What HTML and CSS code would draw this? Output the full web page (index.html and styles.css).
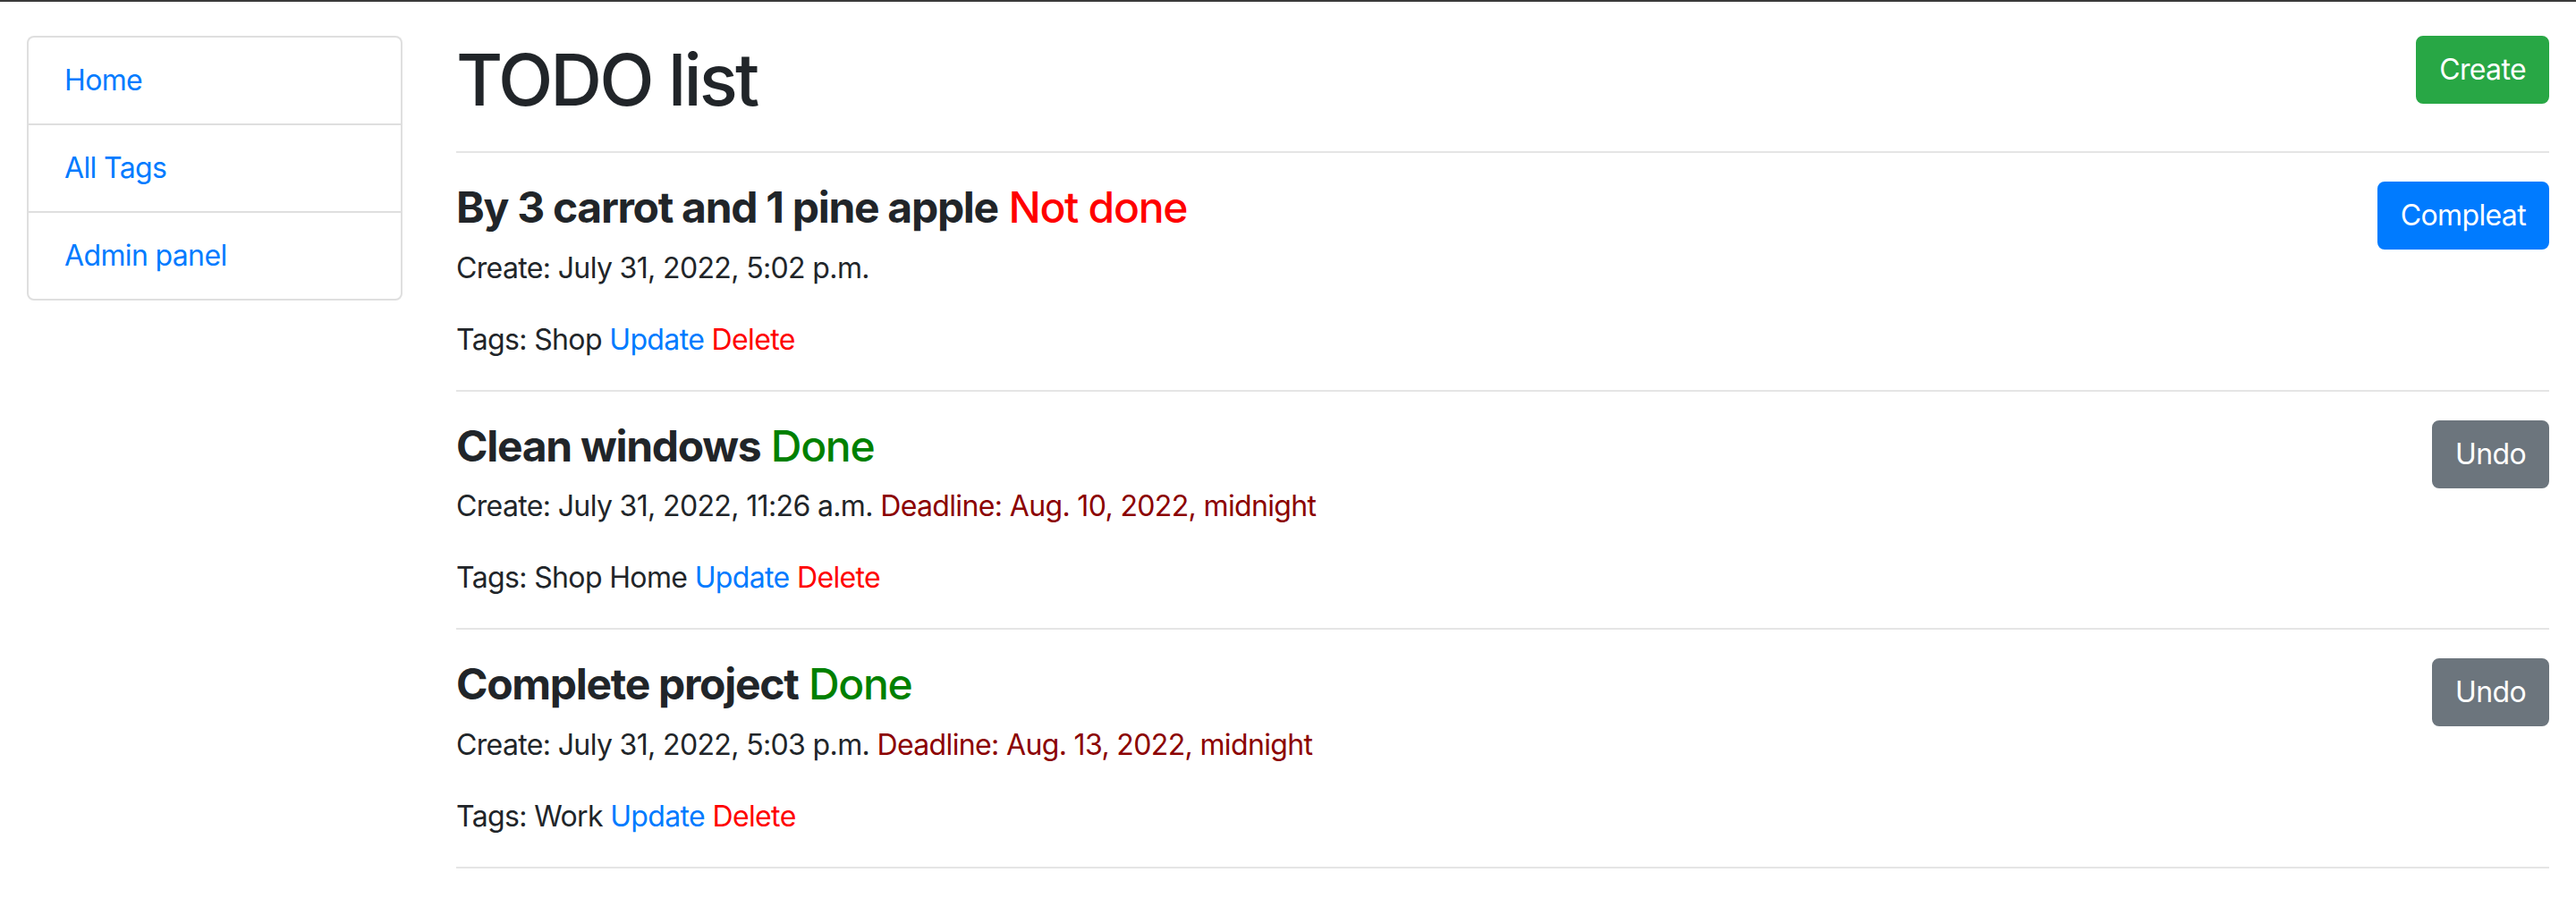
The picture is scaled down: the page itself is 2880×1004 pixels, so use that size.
FILE: index.html
```html
<!DOCTYPE html>
<html lang="en">
<head>
<meta charset="utf-8">
<title>TODO list</title>
<link rel="stylesheet" href="styles.css">
</head>
<body>
<div class="container">
  <div class="row">
    <aside class="col-side">
      <nav class="list-group">
        <a class="list-item" href="#">Home</a>
        <a class="list-item" href="#">All Tags</a>
        <a class="list-item" href="#">Admin panel</a>
      </nav>
    </aside>
    <main class="col-main">
      <div class="header">
        <h1 class="title">TODO list</h1>
        <a class="btn btn-success" href="#">Create</a>
      </div>
      <hr class="divider">
      <div class="todo">
        <div class="todo-body">
          <h4 class="todo-title"><b>By 3 carrot and 1 pine apple</b> <span class="st-not">Not done</span></h4>
          <p class="meta">Create: July 31, 2022, 5:02 p.m.</p>
          <p class="tags">Tags: Shop <a class="lnk-upd" href="#">Update</a> <a class="lnk-del" href="#">Delete</a></p>
        </div>
        <a class="btn btn-primary" href="#">Compleat</a>
      </div>
      <hr class="divider">
      <div class="todo">
        <div class="todo-body">
          <h4 class="todo-title"><b>Clean windows</b> <span class="st-done">Done</span></h4>
          <p class="meta">Create: July 31, 2022, 11:26 a.m. <span class="deadline">Deadline: Aug. 10, 2022, midnight</span></p>
          <p class="tags">Tags: Shop Home <a class="lnk-upd" href="#">Update</a> <a class="lnk-del" href="#">Delete</a></p>
        </div>
        <a class="btn btn-secondary" href="#">Undo</a>
      </div>
      <hr class="divider">
      <div class="todo">
        <div class="todo-body">
          <h4 class="todo-title"><b>Complete project</b> <span class="st-done">Done</span></h4>
          <p class="meta">Create: July 31, 2022, 5:03 p.m. <span class="deadline">Deadline: Aug. 13, 2022, midnight</span></p>
          <p class="tags">Tags: Work <a class="lnk-upd" href="#">Update</a> <a class="lnk-del" href="#">Delete</a></p>
        </div>
        <a class="btn btn-secondary" href="#">Undo</a>
      </div>
      <hr class="divider">
    </main>
  </div>
</div>
</body>
</html>
```
FILE: styles.css
```css
* { box-sizing: border-box; }

html, body {
  margin: 0;
  padding: 0;
  background: #fff;
}

body {
  border-top: 2px solid #3a3a3a;
  font-family: Inter, "Liberation Sans", Arial, sans-serif;
  font-size: 32px;
  line-height: 48px;
  letter-spacing: -0.02em;
  color: #212529;
}

a { text-decoration: none; }

.container {
  padding: 38px 30px 0;
}

.row {
  display: flex;
  margin: 0 -30px;
}

.col-side {
  flex: 0 0 16.6667%;
  max-width: 16.6667%;
  padding: 0 30px;
}

.col-main {
  flex: 0 0 83.3333%;
  max-width: 83.3333%;
  padding: 0 30px;
}

.list-group {
  display: flex;
  flex-direction: column;
}

.list-item {
  display: block;
  padding: 24px 40px;
  border: 2px solid rgba(0, 0, 0, 0.125);
  margin-bottom: -2px;
  color: #007bff;
  background: #fff;
}

.list-item:first-child {
  border-top-left-radius: 8px;
  border-top-right-radius: 8px;
}

.list-item:last-child {
  margin-bottom: 0;
  border-bottom-left-radius: 8px;
  border-bottom-right-radius: 8px;
}

.header {
  display: flex;
  justify-content: space-between;
  align-items: flex-start;
}

.title {
  margin: 1px 0 0;
  font-size: 80px;
  line-height: 96px;
  font-weight: 500;
  letter-spacing: -0.036em;
}

.divider {
  margin: 32px 0;
  border: 0;
  border-top: 2px solid rgba(0, 0, 0, 0.1);
  height: 0;
}

.btn {
  display: inline-block;
  padding: 12px 24px;
  border: 2px solid transparent;
  border-radius: 8px;
  font-size: 32px;
  line-height: 48px;
  color: #fff;
  white-space: nowrap;
}

.btn-success { background: #28a745; border-color: #28a745; }
.btn-primary { background: #007bff; border-color: #007bff; }
.btn-secondary { background: #6c757d; border-color: #6c757d; }

.todo {
  display: flex;
  justify-content: space-between;
  align-items: flex-start;
}

.todo-title {
  margin: 0 0 15px;
  font-size: 48px;
  line-height: 57.6px;
  font-weight: 500;
  letter-spacing: -0.027em;
}

.todo-title b { font-weight: 700; }

.meta { margin: 0 0 32px; }
.tags { margin: 0; }

.st-not { color: #ff0000; }
.st-done { color: #008000; }
.deadline { color: #8b0000; }
.lnk-upd { color: #007bff; }
.lnk-del { color: #ff0000; }
```
